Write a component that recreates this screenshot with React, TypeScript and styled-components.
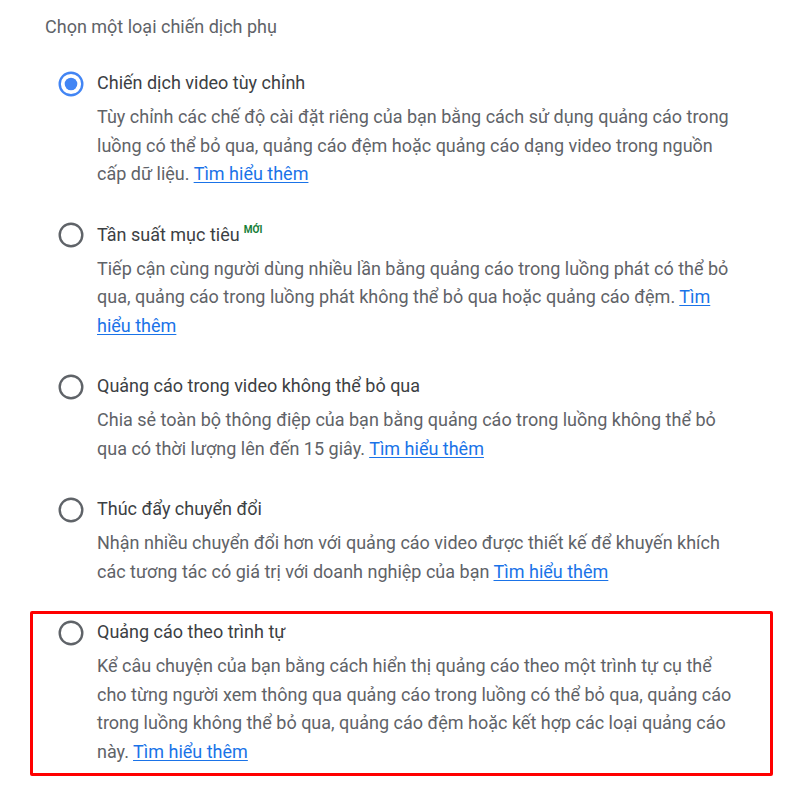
import styled, { createGlobalStyle } from 'styled-components'

// ── Global ─────────────────────────────────────────────────────────────────────

const GlobalStyle = createGlobalStyle`
  body {
    margin: 0;
    background: #fff;
    font-family: Roboto, "Noto Sans", Arial, sans-serif;
    -webkit-font-smoothing: antialiased;
  }
`

// ── Styled components ──────────────────────────────────────────────────────────

const Page = styled.div`
  width: 800px;
  padding: 12px 0 0 30px;
  box-sizing: border-box;
`

const Heading = styled.div`
  margin: 0 0 21px 15px;
  font-size: 18px;
  line-height: 29px;
  color: #5f6368;
`

const OptionList = styled.div`
  display: flex;
  flex-direction: column;
  gap: 15.25px;
  width: 743px;
`

const Option = styled.label<{ $highlighted?: boolean }>`
  display: flex;
  gap: 13px;
  padding: 3px 30px 6.5px 25px;
  border: 3px solid ${p => (p.$highlighted ? '#ff0000' : 'transparent')};
  border-radius: 2px;
  cursor: pointer;
`

const RadioWrap = styled.span`
  flex: none;
  width: 26px;
  height: 29px;
  display: flex;
  align-items: center;
  justify-content: center;
  padding-top: 1px;
`

const Body = styled.div`
  flex: 1;
  min-width: 0;
`

const Title = styled.div`
  font-size: 18px;
  line-height: 29px;
  height: 29px;
  color: #3c4043;
  margin-bottom: 6.25px;
`

const NewBadge = styled.span`
  position: relative;
  top: -8px;
  margin-left: 4px;
  font-size: 10px;
  font-weight: 700;
  color: #188038;
`

const Description = styled.div`
  font-size: 18px;
  line-height: 28.5px;
  color: #5f6368;
`

const LearnMore = styled.a`
  color: #1a73e8;
  text-decoration: underline;
  text-underline-offset: 2px;
`

// ── Radio ──────────────────────────────────────────────────────────────────────

function Radio({ checked }: { checked?: boolean }) {
  const color = checked ? '#4285f4' : '#5f6368'
  return (
    <RadioWrap>
      <svg width="26" height="26" viewBox="0 0 26 26">
        <circle cx="13" cy="13" r="11.3" fill="none" stroke={color} strokeWidth="2.4" />
        {checked && <circle cx="13" cy="13" r="6.3" fill={color} />}
      </svg>
    </RadioWrap>
  )
}

// ── Data ───────────────────────────────────────────────────────────────────────

interface SubtypeOption {
  title: string
  isNew?: boolean
  text: string
  highlighted?: boolean
}

const options: SubtypeOption[] = [
  {
    title: 'Chiến dịch video tùy chỉnh',
    text: 'Tùy chỉnh các chế độ cài đặt riêng của bạn bằng cách sử dụng quảng cáo trong luồng có thể bỏ qua, quảng cáo đệm hoặc quảng cáo dạng video trong nguồn cấp dữ liệu.',
  },
  {
    title: 'Tần suất mục tiêu',
    isNew: true,
    text: 'Tiếp cận cùng người dùng nhiều lần bằng quảng cáo trong luồng phát có thể bỏ qua, quảng cáo trong luồng phát không thể bỏ qua hoặc quảng cáo đệm.',
  },
  {
    title: 'Quảng cáo trong video không thể bỏ qua',
    text: 'Chia sẻ toàn bộ thông điệp của bạn bằng quảng cáo trong luồng không thể bỏ qua có thời lượng lên đến 15 giây.',
  },
  {
    title: 'Thúc đẩy chuyển đổi',
    text: 'Nhận nhiều chuyển đổi hơn với quảng cáo video được thiết kế để khuyến khích các tương tác có giá trị với doanh nghiệp của bạn',
  },
  {
    title: 'Quảng cáo theo trình tự',
    text: 'Kể câu chuyện của bạn bằng cách hiển thị quảng cáo theo một trình tự cụ thể cho từng người xem thông qua quảng cáo trong luồng có thể bỏ qua, quảng cáo trong luồng không thể bỏ qua, quảng cáo đệm hoặc kết hợp các loại quảng cáo này.',
    highlighted: true,
  },
]

// ── Component ──────────────────────────────────────────────────────────────────

export default function App() {
  return (
    <>
      <GlobalStyle />
      <Page>
        <Heading>Chọn một loại chiến dịch phụ</Heading>
        <OptionList>
          {options.map((o, i) => (
            <Option key={o.title} $highlighted={o.highlighted}>
              <Radio checked={i === 0} />
              <Body>
                <Title>
                  {o.title}
                  {o.isNew && <NewBadge>MỚI</NewBadge>}
                </Title>
                <Description>
                  {o.text} <LearnMore href="#">Tìm hiểu thêm</LearnMore>
                </Description>
              </Body>
            </Option>
          ))}
        </OptionList>
      </Page>
    </>
  )
}
